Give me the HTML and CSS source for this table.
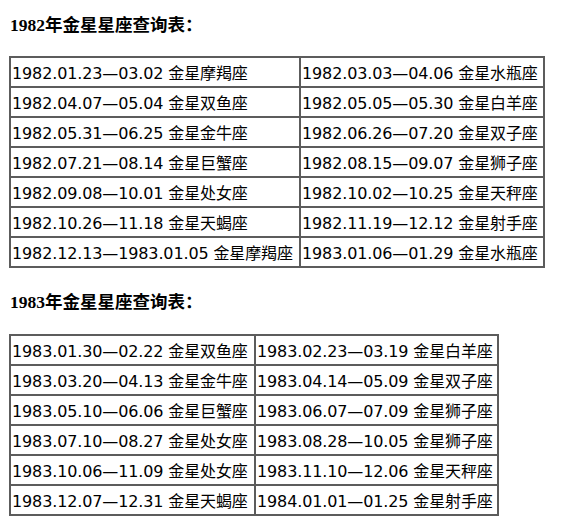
FILE: index.html
```html
<!DOCTYPE html>
<html lang="zh-CN">
<head>
<meta charset="utf-8">
<title>金星星座查询表</title>
<link rel="stylesheet" href="styles.css">
</head>
<body>
<div class="page">
  <p class="title first">1982年金星星座查询表：</p>
  <table class="venus t1">
    <colgroup><col class="c1a"><col class="c1b"></colgroup>
    <tr><td>1982.01.23—03.02 金星摩羯座</td><td>1982.03.03—04.06 金星水瓶座</td></tr>
    <tr><td>1982.04.07—05.04 金星双鱼座</td><td>1982.05.05—05.30 金星白羊座</td></tr>
    <tr><td>1982.05.31—06.25 金星金牛座</td><td>1982.06.26—07.20 金星双子座</td></tr>
    <tr><td>1982.07.21—08.14 金星巨蟹座</td><td>1982.08.15—09.07 金星狮子座</td></tr>
    <tr><td>1982.09.08—10.01 金星处女座</td><td>1982.10.02—10.25 金星天秤座</td></tr>
    <tr><td>1982.10.26—11.18 金星天蝎座</td><td>1982.11.19—12.12 金星射手座</td></tr>
    <tr><td>1982.12.13—1983.01.05 金星摩羯座</td><td>1983.01.06—01.29 金星水瓶座</td></tr>
  </table>
  <p class="title">1983年金星星座查询表：</p>
  <table class="venus t2">
    <colgroup><col class="c2a"><col class="c2b"></colgroup>
    <tr><td>1983.01.30—02.22 金星双鱼座</td><td>1983.02.23—03.19 金星白羊座</td></tr>
    <tr><td>1983.03.20—04.13 金星金牛座</td><td>1983.04.14—05.09 金星双子座</td></tr>
    <tr><td>1983.05.10—06.06 金星巨蟹座</td><td>1983.06.07—07.09 金星狮子座</td></tr>
    <tr><td>1983.07.10—08.27 金星处女座</td><td>1983.08.28—10.05 金星狮子座</td></tr>
    <tr><td>1983.10.06—11.09 金星处女座</td><td>1983.11.10—12.06 金星天秤座</td></tr>
    <tr><td>1983.12.07—12.31 金星天蝎座</td><td>1984.01.01—01.25 金星射手座</td></tr>
  </table>
</div>
</body>
</html>
```
FILE: styles.css
```css
html, body {
  margin: 0;
  padding: 0;
  background: #fff;
}

.page {
  padding: 13px 9px 0 9px;
  color: #000;
}

.title {
  margin: 0 0 20px 1px;
  font-family: "Liberation Serif", "Noto Sans CJK SC", serif;
  font-weight: bold;
  font-size: 17.5px;
  line-height: 24px;
}

.title.first {
  margin-bottom: 19px;
}

.venus {
  border-collapse: separate;
  border-spacing: 0;
  border: 1px solid #5c5c5c;
  table-layout: fixed;
  font-family: "DejaVu Sans", "Noto Sans CJK SC", sans-serif;
  font-size: 16px;
  letter-spacing: -0.13px;
  margin-bottom: 22px;
}

.venus td {
  border: 1px solid #5c5c5c;
  padding: 4px 1px 0 1px;
  line-height: 24px;
  height: 30px;
  white-space: nowrap;
  overflow: hidden;
  box-sizing: border-box;
}

.t1 { width: 536px; }
.t2 { width: 490px; }

.c1a { width: 290px; }
.c1b { width: 244px; }
.c2a { width: 245px; }
.c2b { width: 243px; }
```
